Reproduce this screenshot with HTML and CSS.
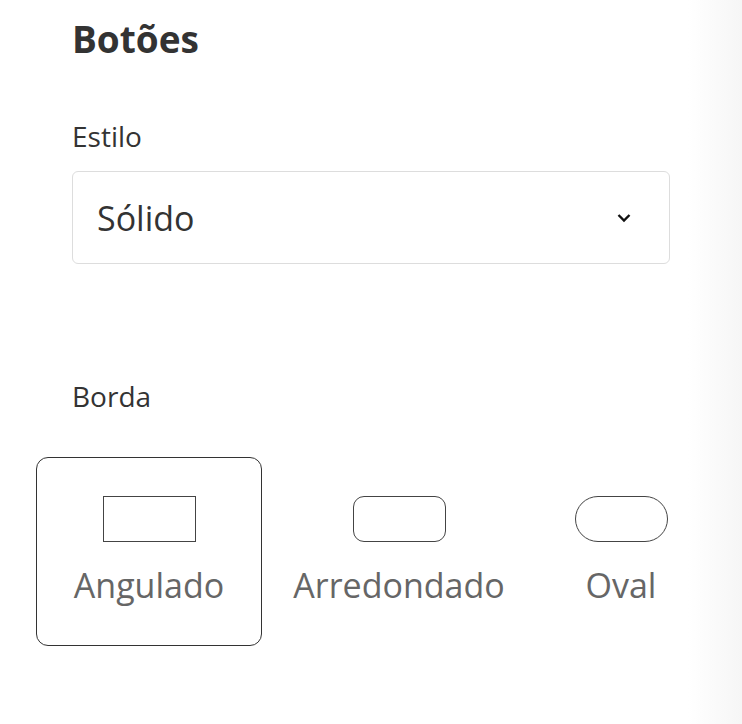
FILE: index.html
```html
<!DOCTYPE html>
<html lang="pt">
  <head>
    <meta charset="UTF-8" />
    <meta name="viewport" content="width=device-width, initial-scale=1.0" />
    <title>Botões</title>
    <link rel="stylesheet" href="styles.css">
  </head>
  <body>
    <div class="panel">
      <h2 class="title">Botões</h2>

      <div class="field">
        <label class="field-label">Estilo</label>
        <div class="select">
          <span>Sólido</span>
          <svg width="16" height="11" viewBox="0 0 16 11">
            <path d="M2.5 3 L8 8.5 L13.5 3" fill="none" stroke="#111" stroke-width="2.4" />
          </svg>
        </div>
      </div>

      <div class="field border-field">
        <label class="field-label">Borda</label>
        <div class="options">
          <div class="option selected">
            <span class="shape square"></span>
            <span class="option-name">Angulado</span>
          </div>
          <div class="option">
            <span class="shape rounded"></span>
            <span class="option-name">Arredondado</span>
          </div>
          <div class="option last">
            <span class="shape oval"></span>
            <span class="option-name">Oval</span>
          </div>
        </div>
      </div>
    </div>
  </body>
</html>
```

FILE: styles.css
```css
body {
  margin: 0;
  height: 724px;
  font-family: "Open Sans", "Noto Sans", sans-serif;
  color: #333;
  background: linear-gradient(to right, #fff 0, #fff 688px, #f6f6f6 742px);
}

.panel {
  padding: 14px 72px 0 72px;
}

.title {
  margin: 0;
  font-size: 37px;
  font-weight: 700;
  line-height: 50px;
}

.field {
  margin-top: 52px;
}

.field-label {
  display: block;
  font-size: 28px;
  line-height: 40px;
  margin-bottom: 15px;
}

.select {
  display: flex;
  align-items: center;
  justify-content: space-between;
  height: 93px;
  box-sizing: border-box;
  padding: 0 37px 0 24px;
  border: 1px solid #ddd;
  border-radius: 6px;
  font-size: 34px;
}

.border-field {
  margin-top: 112px;
}

.border-field .field-label {
  margin-bottom: 41px;
}

.options {
  display: flex;
  justify-content: space-between;
  margin: 0 -36px;
}

.option {
  display: flex;
  flex-direction: column;
  align-items: center;
  width: 226px;
  height: 189px;
  box-sizing: border-box;
  padding-top: 38px;
  border: 1px solid transparent;
  border-radius: 12px;
}

.option.selected {
  border-color: #333;
}

.option.last {
  width: 170px;
}

.shape {
  display: block;
  width: 93px;
  height: 46px;
  box-sizing: border-box;
  border: 1.5px solid #444;
}

.shape.rounded {
  border-radius: 11px;
}

.shape.oval {
  border-radius: 23px;
}

.option-name {
  margin-top: 20px;
  font-size: 34px;
  line-height: 46px;
  color: #666;
}
```
